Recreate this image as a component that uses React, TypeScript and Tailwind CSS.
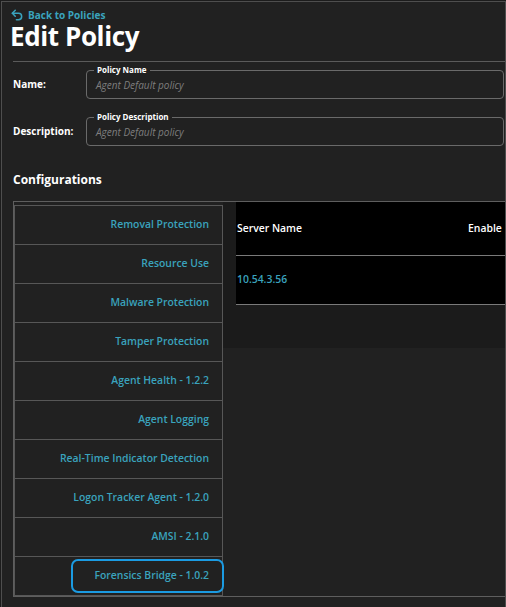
import { Undo2 } from "lucide-react"

const configItems = [
  "Removal Protection",
  "Resource Use",
  "Malware Protection",
  "Tamper Protection",
  "Agent Health - 1.2.2",
  "Agent Logging",
  "Real-Time Indicator Detection",
  "Logon Tracker Agent - 1.2.0",
  "AMSI - 2.1.0",
  "Forensics Bridge - 1.0.2",
]

function PolicyField({ label, legend, value }: { label: string; legend: string; value: string }) {
  return (
    <div className="flex items-start pl-[11px] pr-[1px]">
      <div className="mt-[13px] w-[73px] text-[10px] font-bold leading-[14px] text-white">{label}</div>
      <fieldset className="h-[35px] flex-1 rounded-[4px] border border-[#6a6a6a] pl-[7px]">
        <legend className="px-[3px] text-[8px] font-bold leading-[12px] text-white">{legend}</legend>
        <div className="ml-[2px] mt-[2px] text-[10px] italic leading-[14px] text-[#7e7e7e]">{value}</div>
      </fieldset>
    </div>
  )
}

export default function App() {
  const selected = configItems.length - 1

  return (
    <div className="h-[607px] w-[506px] bg-[#1c1c1c] pl-px pt-px" style={{ fontFamily: '"Open Sans", "Liberation Sans", sans-serif' }}>
      <div className="flex h-full flex-col border-l border-r border-t border-[#4e4e4e] bg-[#212121]">
        <div className="pl-[8px] pt-[6px]">
          <a href="#" className="flex h-[13px] items-center gap-[4px] text-[10px] font-bold leading-[12px] text-[#3aa3bd]">
            <Undo2 className="h-[14px] w-[14px]" strokeWidth={2.6} />
            Back to Policies
          </a>
          <h1 className="mt-[2px] text-[26px] font-bold leading-[27px] tracking-[-0.4px] text-white">Edit Policy</h1>
        </div>

        <div className="ml-[11px] mt-[11px] border-t border-[#5a5a5a]" />

        <div className="mt-[2px]">
          <PolicyField label="Name:" legend="Policy Name" value="Agent Default policy" />
        </div>
        <div className="mt-[12px]">
          <PolicyField label="Description:" legend="Policy Description" value="Agent Default policy" />
        </div>

        <h2 className="ml-[11px] mt-[25px] text-[12px] font-bold leading-[18px] text-white">Configurations</h2>

        <div className="ml-[11px] mt-[12px] flex h-[396px] border-b border-l border-t border-[#5e5e5e]">
          <nav className="w-[209px] shrink-0 pt-[3px]">
            {configItems.map((item, i) => (
              <div
                key={item}
                className={
                  i === configItems.length - 1
                    ? "flex h-[40px] items-center justify-end border-b border-l border-r border-t border-[#575757]"
                    : "flex h-[39px] items-center justify-end border-l border-r border-t border-[#575757]"
                }
              >
                {i === selected ? (
                  <span className="relative z-10 -mr-[2px] flex h-[34px] w-[153px] items-center justify-end rounded-[7px] border-2 border-[#1b9be2] pr-[13px] text-[10.4px] font-semibold text-[#3aa3bd]">
                    {item}
                  </span>
                ) : (
                  <span className="pr-[13px] text-[10.4px] font-semibold text-[#3aa3bd]">{item}</span>
                )}
              </div>
            ))}
          </nav>

          <div className="flex-1">
            <div className="h-[146px] bg-[#1b1b1b] pl-[13px]">
              <div className="bg-black">
                <div className="flex h-[54px] items-center border-b border-[#7a7a7a] pl-px text-[10.4px] font-semibold text-white">
                  <span className="w-[231px]">Server Name</span>
                  <span>Enable</span>
                </div>
                <div className="flex h-[49px] items-center border-b border-[#7a7a7a] pl-px text-[10.4px] font-semibold text-[#3aa3bd]">
                  10.54.3.56
                </div>
              </div>
            </div>
          </div>
        </div>
      </div>
    </div>
  )
}
